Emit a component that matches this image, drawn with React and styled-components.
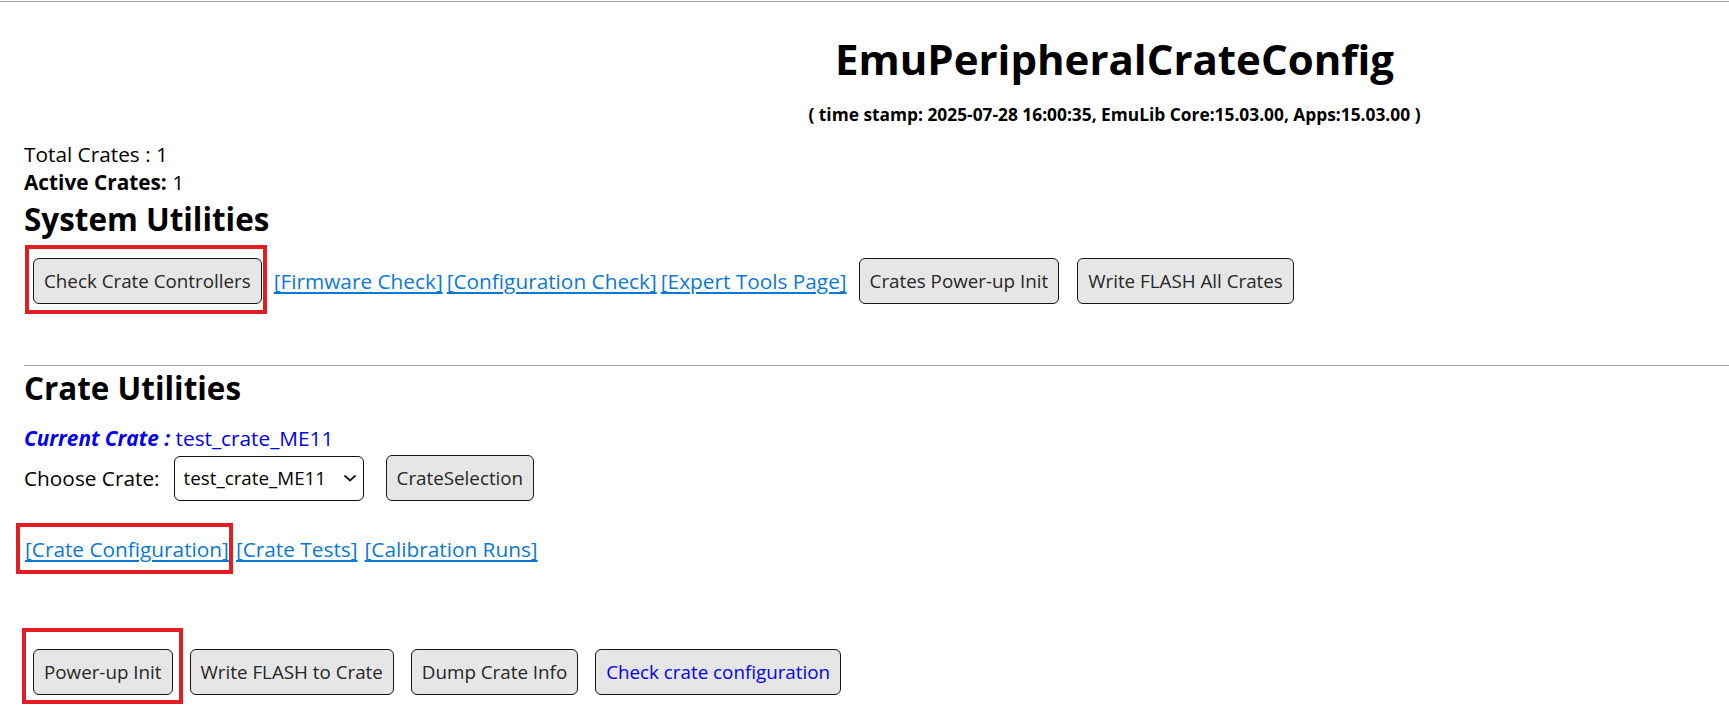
import React from 'react';
import styled, { createGlobalStyle } from 'styled-components';

const Global = createGlobalStyle`
  html, body { margin: 0; padding: 0; background: #fff; }
  body {
    font-family: "Open Sans", "Noto Sans", "Liberation Sans", sans-serif;
    font-size: 20.8px;
    color: #000;
  }
`;

const Page = styled.div`
  width: 100%;
  min-height: 726px;
  padding-bottom: 20px;
  box-sizing: border-box;
`;

const Rule = styled.hr`
  margin: ${p => p.$top || 0}px 0 0;
  border: 0;
  border-top: 1px solid #a3a3a3;
  height: 0;
`;

const Header = styled.header`
  padding: 29px 0 0 500px;
  text-align: center;
`;

const Title = styled.h1`
  margin: 0;
  font-size: 42px;
  line-height: 56px;
  font-weight: 700;
`;

const Stamp = styled.p`
  margin: 15px 0 0;
  font-size: 17.33px;
  line-height: 24px;
  font-weight: 700;
`;

const Main = styled.main`
  padding-left: 24px;
  margin-top: 14px;
`;

const Stat = styled.div`
  line-height: 28px;
`;

const SectionTitle = styled.h2`
  margin: ${p => p.$top}px 0 0;
  font-size: 31.4px;
  line-height: 36px;
  font-weight: 700;
`;

const Row = styled.div`
  display: flex;
  align-items: center;
  gap: ${p => p.$gap || 0}px;
  margin-top: ${p => p.$top || 0}px;
  padding-left: ${p => p.$indent || 0}px;
  min-height: ${p => p.$h || 28}px;
`;

const Group = styled.div`
  display: flex;
  align-items: center;
  gap: ${p => p.$gap}px;
`;

/* annotation frame: drawn by its own border, negative margins keep the layout unchanged */
const Highlight = styled.span`
  display: flex;
  align-items: center;
  border: 4px solid #e31d24;
  padding: ${p => p.$pad};
  margin: ${p => p.$m};
`;

const Button = styled.button`
  height: 46px;
  padding: 0 10px;
  margin: 0;
  font-family: "Open Sans", "Noto Sans", sans-serif;
  font-size: 18.8px;
  line-height: 26px;
  color: ${p => (p.$blue ? '#0000f0' : '#262626')};
  background: #e6e6e6;
  border: 1px solid #161616;
  border-radius: 6px;
  white-space: nowrap;
  cursor: pointer;
`;

const Link = styled.a`
  color: #0a79d6;
  text-decoration: underline;
  text-underline-offset: 3px;
  line-height: 28px;
  white-space: nowrap;
  cursor: pointer;
`;

const Current = styled.div`
  margin-top: 18px;
  line-height: 28px;
  color: #0000f5;
`;

const CurrentLabel = styled.b`
  font-style: italic;
`;

const ChooseLabel = styled.span`
  line-height: 28px;
`;

const SelectWrap = styled.div`
  position: relative;
  width: 190px;
  height: 45px;
  margin-left: ${p => p.$ml}px;
`;

const Select = styled.select`
  appearance: none;
  -webkit-appearance: none;
  width: 100%;
  height: 100%;
  margin: 0;
  padding: 0 30px 0 9px;
  font-family: "Open Sans", "Noto Sans", sans-serif;
  font-size: 18.8px;
  color: #000;
  background: #fff;
  border: 1px solid #111;
  border-radius: 6px;
`;

const Chevron = styled.svg`
  position: absolute;
  right: 7px;
  top: 50%;
  margin-top: -4px;
  pointer-events: none;
`;

const Spaced = styled.div`
  margin-left: ${p => p.$ml}px;
  display: flex;
`;

export default function App() {
  return (
    <Page>
      <Global />
      <Rule $top={1} />
      <Header>
        <Title>EmuPeripheralCrateConfig</Title>
        <Stamp>( time stamp: 2025-07-28 16:00:35, EmuLib Core:15.03.00, Apps:15.03.00 )</Stamp>
      </Header>
      <Main>
        <Stat>Total Crates : 1</Stat>
        <Stat><b>Active Crates:</b> 1</Stat>
        <SectionTitle $top={5}>System Utilities</SectionTitle>
        <Row $top={21} $indent={9} $gap={12} $h={46}>
          <Highlight $pad="9px 1px 6px 4px" $m="-13px -5px -10px -8px">
            <Button>Check Crate Controllers</Button>
          </Highlight>
          <Group $gap={4}>
            <Link>[Firmware Check]</Link>
            <Link>[Configuration Check]</Link>
            <Link>[Expert Tools Page]</Link>
          </Group>
          <Group $gap={18}>
            <Button>Crates Power-up Init</Button>
            <Button>Write FLASH All Crates</Button>
          </Group>
        </Row>
        <Rule $top={61} />
        <SectionTitle $top={4}>Crate Utilities</SectionTitle>
        <Current>
          <CurrentLabel>Current Crate :</CurrentLabel> test_crate_ME11
        </Current>
        <Row $top={3} $h={45}>
          <ChooseLabel>Choose Crate:</ChooseLabel>
          <SelectWrap $ml={14}>
            <Select defaultValue="test_crate_ME11">
              <option value="test_crate_ME11">test_crate_ME11</option>
            </Select>
            <Chevron width="14" height="8" viewBox="0 0 14 8">
              <path d="M1.5 1.5 L7 6.5 L12.5 1.5" fill="none" stroke="#1a1a1a" strokeWidth="1.8" />
            </Chevron>
          </SelectWrap>
          <Spaced $ml={22}>
            <Button>CrateSelection</Button>
          </Spaced>
        </Row>
        <Row $top={34} $gap={7} $indent={1}>
          <Highlight $pad="8px 0 7px 5px" $m="-12px -4px -11px -9px">
            <Link>[Crate Configuration]</Link>
          </Highlight>
          <Link>[Crate Tests]</Link>
          <Link>[Calibration Runs]</Link>
        </Row>
        <Row $top={86} $indent={9} $gap={17} $h={46}>
          <Highlight $pad="17px 6px 5px 7px" $m="-21px -10px -9px -11px">
            <Button>Power-up Init</Button>
          </Highlight>
          <Button>Write FLASH to Crate</Button>
          <Button>Dump Crate Info</Button>
          <Button $blue>Check crate configuration</Button>
        </Row>
      </Main>
    </Page>
  );
}
